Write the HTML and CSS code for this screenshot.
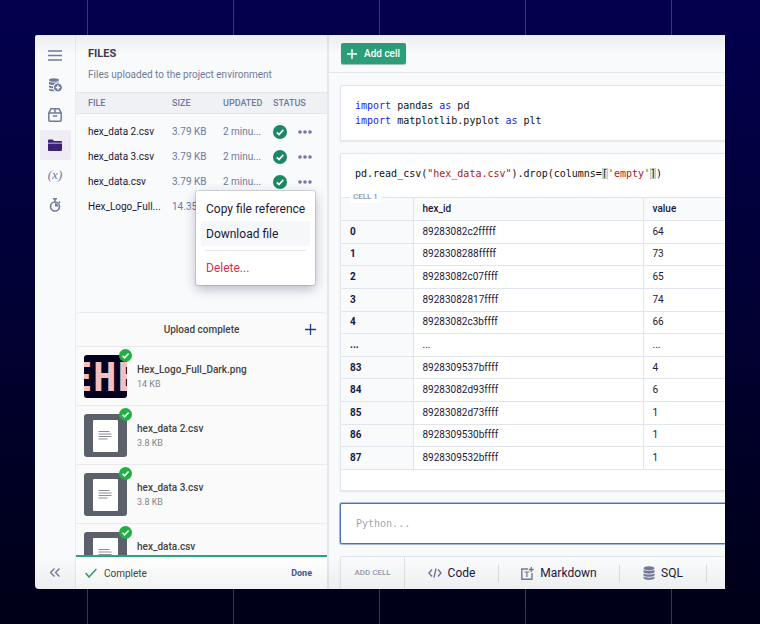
FILE: index.html
```
<!DOCTYPE html>
<html lang="en">
<head>
  <meta charset="UTF-8" />
  <meta name="viewport" content="width=device-width, initial-scale=1.0" />
  <title>Files - Project</title>
  <link rel="stylesheet" href="styles.css">
</head>
<body>
  <!-- shared icons -->
  <svg class="sprite" aria-hidden="true">
    <symbol id="ok" viewBox="0 0 14 14">
      <circle cx="7" cy="7" r="7" />
      <path d="M3.8 7.3l2.2 2.2 4.3-4.6" fill="none" stroke="#fff" stroke-width="1.7" />
    </symbol>
    <symbol id="dots" viewBox="0 0 14 4">
      <circle cx="2" cy="2" r="1.8" /><circle cx="7" cy="2" r="1.8" /><circle cx="12" cy="2" r="1.8" />
    </symbol>
    <symbol id="doc" viewBox="0 0 43 43">
      <rect width="43" height="43" fill="#5b606b" />
      <rect x="9" y="6" width="25" height="32" rx="1" fill="#fff" />
      <path d="M14.500 17.500h11M14.500 20h13M14.500 22.500h13M14.500 25h9" stroke="#8b909b" stroke-width="1.200" />
    </symbol>
    <symbol id="db" viewBox="0 0 12 14">
      <path d="M.5 2.200C.5.900 3 .2 6 .2s5.500.7 5.500 2S9 4.200 6 4.200.5 3.500.5 2.200z" />
      <path d="M.5 3.800C2 5.200 10 5.200 11.500 3.800v2.500C10 8.200 2 8.200.5 6.300z" />
      <path d="M.5 7.300c1.500 1.700 9.500 1.700 11 0v2.200c-1.500 1.700-9.500 1.700-11 0z" />
      <path d="M.5 10.500c1.500 1.600 9.500 1.600 11 0v1.200c0 1.300-2.500 2.100-5.500 2.100S.5 13 .5 11.700z" />
    </symbol>
  </svg>

  <div class="window">
    <nav class="rail">
      <button class="rail-btn" aria-label="Menu">
        <svg width="14" height="11" viewBox="0 0 14 11"><path d="M0 1h14M0 5.500h14M0 10h14" stroke="currentColor" stroke-width="1.400" /></svg>
      </button>
      <button class="rail-btn" aria-label="Data connections">
        <svg width="14" height="14" viewBox="0 0 14 14" fill="currentColor">
          <ellipse cx="6" cy="2" rx="5" ry="1.800" />
          <path d="M1 3.500c1.500 1.300 8.500 1.300 10 0v1.200c-2.500-.4-4.600.6-5.500 2.400C3.500 7 1.800 6.600 1 6zM1 7.200c1 .7 2.500 1 4 1v2c-1.500 0-3-.3-4-1zM1 10.400c1 .7 2.700 1 4.400 1 .3.800.8 1.400 1.400 1.900C4 13.500 1 13 1 12z" />
          <path fill-rule="evenodd" d="M9.900 5.500a4 4 0 1 0 .01 0zM9.200 7.300h1.400v1.500h1.500v1.400h-1.500v1.500H9.200v-1.500H7.700V8.800h1.500z" />
        </svg>
      </button>
      <button class="rail-btn" aria-label="Packages">
        <svg width="14" height="14" viewBox="0 0 14 14" fill="none" stroke="currentColor" stroke-width="1.500">
          <path d="M.8 5v7.200q0 1 1 1h10.400q1 0 1-1V5L11 .8H3zM.8 5h12.400M7 .8V5M4.800 8h4.400" />
        </svg>
      </button>
      <button class="rail-btn active" aria-label="Files">
        <svg width="14" height="12" viewBox="0 0 14 12" fill="currentColor">
          <path d="M0 1.500Q0 .5 1 .5h3.500L6 2h7q1 0 1 1v.7H0zM0 4.500h14V11q0 1-1 1H1q-1 0-1-1z" />
        </svg>
      </button>
      <button class="rail-btn variables" aria-label="Variables">(x)</button>
      <button class="rail-btn" aria-label="Schedules">
        <svg width="12" height="14" viewBox="0 0 12 14">
          <circle cx="6" cy="8.500" r="4.500" fill="none" stroke="currentColor" stroke-width="1.600" />
          <path d="M4 .8h4M6 .8v3M9.800 3.600l1.200 1.200" stroke="currentColor" stroke-width="1.500" />
          <path d="M6 5.200v3.300h3.200A3.300 3.300 0 0 0 6 5.200z" fill="currentColor" />
        </svg>
      </button>
      <button class="rail-btn collapse" aria-label="Collapse">
        <svg width="10" height="9" viewBox="0 0 10 9" fill="none" stroke="currentColor" stroke-width="1.400"><path d="M4.500.5l-4 4 4 4M9.500.5l-4 4 4 4" /></svg>
      </button>
    </nav>

    <aside class="panel">
      <section class="files">
        <header class="files-head">
          <h1>FILES</h1>
          <p>Files uploaded to the project environment</p>
        </header>
        <table class="file-table">
          <colgroup><col class="c-file"><col class="c-size"><col class="c-updated"><col class="c-status"><col></colgroup>
          <thead>
            <tr><th>FILE</th><th>SIZE</th><th>UPDATED</th><th colspan="2">STATUS</th></tr>
          </thead>
          <tbody>
            <tr>
              <td class="name">hex_data 2.csv</td><td>3.79 KB</td><td>2 minu...</td>
              <td><svg class="ok"><use href="#ok" /></svg></td>
              <td><button class="more" aria-label="More"><svg><use href="#dots" /></svg></button></td>
            </tr>
            <tr>
              <td class="name">hex_data 3.csv</td><td>3.79 KB</td><td>2 minu...</td>
              <td><svg class="ok"><use href="#ok" /></svg></td>
              <td><button class="more" aria-label="More"><svg><use href="#dots" /></svg></button></td>
            </tr>
            <tr>
              <td class="name">hex_data.csv</td><td>3.79 KB</td><td>2 minu...</td>
              <td><svg class="ok"><use href="#ok" /></svg></td>
              <td class="menu-anchor">
                <button class="more" aria-label="More"><svg><use href="#dots" /></svg></button>
                <div class="menu">
                  <button>Copy file reference</button>
                  <button class="hover">Download file</button>
                  <hr>
                  <button class="danger">Delete...</button>
                </div>
              </td>
            </tr>
            <tr>
              <td class="name">Hex_Logo_Full...</td><td>14.35 KB</td><td></td><td></td><td></td>
            </tr>
          </tbody>
        </table>
      </section>

      <section class="uploads">
        <header class="uploads-head">
          <h2>Upload complete</h2>
          <button class="add" aria-label="Add more">
            <svg width="11" height="11" viewBox="0 0 11 11"><path d="M5.500 0v11M0 5.500h11" stroke="currentColor" stroke-width="1.300" /></svg>
          </button>
        </header>
        <ul class="upload-list">
          <li>
            <div class="thumb">
              <svg class="preview" viewBox="0 0 43 43" role="img" aria-label="Hex logo">
                <rect width="43" height="43" fill="#04001f" />
                <text class="logo-text" x="-15 9 33" y="36">EHE</text>
              </svg>
              <svg class="badge"><use href="#ok" /></svg>
            </div>
            <div><b>Hex_Logo_Full_Dark.png</b><span>14 KB</span></div>
          </li>
          <li>
            <div class="thumb"><svg class="preview"><use href="#doc" /></svg><svg class="badge"><use href="#ok" /></svg></div>
            <div><b>hex_data 2.csv</b><span>3.8 KB</span></div>
          </li>
          <li>
            <div class="thumb"><svg class="preview"><use href="#doc" /></svg><svg class="badge"><use href="#ok" /></svg></div>
            <div><b>hex_data 3.csv</b><span>3.8 KB</span></div>
          </li>
          <li>
            <div class="thumb"><svg class="preview"><use href="#doc" /></svg><svg class="badge"><use href="#ok" /></svg></div>
            <div><b>hex_data.csv</b></div>
          </li>
        </ul>
        <footer class="uploads-foot">
          <svg width="12" height="10" viewBox="0 0 12 10"><path d="M.6 5l3.400 4L11.400 1" fill="none" stroke="#259b74" stroke-width="1.500" /></svg>
          <span>Complete</span>
          <button>Done</button>
        </footer>
      </section>
    </aside>

    <main class="notebook">
      <div class="toolbar">
        <button class="add-cell">
          <svg width="10" height="10" viewBox="0 0 10 10"><path d="M5 0v10M0 5h10" stroke="#fff" stroke-width="1.500" /></svg>
          Add cell
        </button>
      </div>
      <div class="cells">
        <div class="cell imports">
<pre><i>import</i> pandas <i>as</i> pd
<i>import</i> matplotlib.pyplot <i>as</i> plt</pre>
        </div>

        <div class="cell">
<pre class="query">pd.read_csv(<em>"hex_data.csv"</em>).drop(columns=<mark>[</mark><em>'empty'</em><mark>]</mark>)</pre>
          <div class="output">
            <span class="cell-label">CELL 1</span>
            <table class="data">
              <colgroup><col class="c-index"><col class="c-hex"><col></colgroup>
              <thead><tr><th></th><th>hex_id</th><th>value</th></tr></thead>
              <tbody>
                <tr><th>0</th><td>89283082c2fffff</td><td>64</td></tr>
                <tr><th>1</th><td>8928308288fffff</td><td>73</td></tr>
                <tr><th>2</th><td>89283082c07ffff</td><td>65</td></tr>
                <tr><th>3</th><td>89283082817ffff</td><td>74</td></tr>
                <tr><th>4</th><td>89283082c3bffff</td><td>66</td></tr>
                <tr><th>...</th><td>...</td><td>...</td></tr>
                <tr><th>83</th><td>8928309537bffff</td><td>4</td></tr>
                <tr><th>84</th><td>89283082d93ffff</td><td>6</td></tr>
                <tr><th>85</th><td>89283082d73ffff</td><td>1</td></tr>
                <tr><th>86</th><td>8928309530bffff</td><td>1</td></tr>
                <tr><th>87</th><td>8928309532bffff</td><td>1</td></tr>
              </tbody>
            </table>
          </div>
        </div>

        <textarea class="editor" rows="1" placeholder="Python..." aria-label="Python code"></textarea>

        <div class="cell add-bar">
          <span class="add-label">ADD CELL</span>
          <button class="b-code">
            <svg width="14" height="10" viewBox="0 0 14 10" fill="none" stroke="currentColor" stroke-width="1.400"><path d="M4 1.500L1 5l3 3.500M10 1.500L13 5l-3 3.500M8 .5L6 9.500" /></svg>
            Code
          </button>
          <button class="b-markdown">
            <svg width="13" height="13" viewBox="0 0 13 13" fill="none" stroke="currentColor" stroke-width="1.400"><path d="M7 2H.8v10.200H11V6M10.300 0v5M7.800 2.500h5" /><path d="M3.500 5h4.800M5.900 5v5" stroke-width="1.200" /></svg>
            Markdown
          </button>
          <button class="b-sql">
            <svg width="12" height="14" fill="currentColor"><use href="#db" /></svg>
            SQL
          </button>
        </div>
      </div>
    </main>
  </div>
</body>
</html>
```

FILE: styles.css
```
* {
  box-sizing: border-box;
}
body {
  margin: 0;
  height: 100vh;
  padding: 35px;
  font-family: Roboto, "Liberation Sans", sans-serif;
  font-size: 10px;
  color: #1c1838;
  background:
    repeating-linear-gradient(90deg, transparent 0 87px, rgba(150, 130, 180, 0.4) 87px 88px, transparent 88px 146px),
    linear-gradient(#03004e, #000018);
}
button {
  font: inherit;
  color: inherit;
  background: none;
  border: none;
  padding: 0;
  cursor: pointer;
}
h1, h2, p, ul, pre {
  margin: 0;
  padding: 0;
}
svg {
  display: block;
  flex: none;
}
.sprite {
  position: absolute;
  width: 0;
  height: 0;
}
.window {
  position: relative;
  display: flex;
  height: 100%;
  min-height: 554px;
  overflow: hidden;
  background: #f9fafc;
  border-radius: 2px 0 0 4px;
}
/* soft shade along the top and bottom edge */
.window::after {
  content: "";
  position: absolute;
  inset: 0;
  pointer-events: none;
  background:
    linear-gradient(rgba(60, 70, 80, 0.07), transparent 20px),
    linear-gradient(0deg, rgba(60, 70, 80, 0.07), transparent 32px);
}

/* left rail */
.rail {
  flex: 0 0 41px;
  display: flex;
  flex-direction: column;
  align-items: center;
  padding: 5px 0;
  border-right: 1px solid #e9ebf0;
  color: #717a98;
}
.rail-btn {
  width: 31px;
  height: 30px;
  display: flex;
  align-items: center;
  justify-content: center;
  border-radius: 2px;
}
.rail-btn.active {
  background: #efecf5;
  color: #3b2277;
}
.variables {
  font: italic 13px "Liberation Serif", serif;
}
.collapse {
  margin-top: auto;
  height: 24px;
}

/* files panel */
.panel {
  flex: 0 0 253px;
  display: flex;
  flex-direction: column;
  border-right: 2px solid #e6e8ee;
}
.files {
  flex: 1 1 50%;
}
.files-head {
  height: 57px;
  padding: 12px 12px 0;
}
.files-head h1 {
  font-size: 11px;
  line-height: 14px;
  font-weight: 700;
  color: #3b3953;
}
.files-head p {
  margin-top: 7px;
  line-height: 14px;
  color: #717a98;
}
.file-table {
  width: 100%;
  table-layout: fixed;
  border-collapse: collapse;
  color: #7079a0;
}
.c-file { width: 96px; }
.c-size { width: 51px; }
.c-updated { width: 50px; }
.c-status { width: 25px; }
.file-table th {
  height: 21px;
  padding: 0;
  text-align: left;
  font-size: 9px;
  font-weight: 500;
  background: #f0f1f5;
  border: solid #e4e6eb;
  border-width: 1px 0;
}
.file-table td {
  height: 25px;
  padding: 0;
  white-space: nowrap;
}
.file-table tbody::before {
  content: "";
  display: block;
  height: 5px;
}
.file-table th:first-child,
.file-table td:first-child {
  padding-left: 12px;
}
.file-table .name {
  color: #1c1838;
}
.ok {
  width: 14px;
  height: 14px;
  fill: #1c8765;
}
.more {
  display: block;
  padding: 5px 0;
}
.more svg {
  width: 14px;
  height: 4px;
  fill: #7079a0;
}
.menu-anchor {
  position: relative;
}
.menu {
  position: absolute;
  top: 22px;
  right: 12px;
  z-index: 2;
  width: 119px;
  padding: 5px;
  background: #fff;
  border-radius: 2px;
  box-shadow: 0 0 0 1px rgba(30, 30, 60, 0.14), 0 4px 12px rgba(30, 30, 60, 0.3);
}
.menu button {
  display: block;
  width: 100%;
  height: 25px;
  padding-left: 5px;
  text-align: left;
  white-space: nowrap;
  font-size: 12px;
  color: #1c1838;
}
.menu .hover {
  background: #f6f7f9;
}
.menu hr {
  margin: 4px;
  border: none;
  border-top: 1px solid #e6e7eb;
}
.menu .danger {
  color: #cb3550;
}

/* uploads */
.uploads {
  flex: 0 0 50%;
  display: flex;
  flex-direction: column;
  overflow: hidden;
  background: #fafafa;
  border: 1px solid #e9eaee;
  border-width: 1px 0 0 0;
  border-radius: 4px 4px 0 0;
}
.uploads-head {
  flex: none;
  display: flex;
  align-items: center;
  height: 34px;
  padding: 0 11px;
  border-bottom: 1px solid #eaeaea;
}
.uploads-head h2 {
  flex: 1;
  padding-left: 11px;
  text-align: center;
  font-size: 10px;
  font-weight: 500;
  color: #444;
}
.add {
  color: #1f3d82;
}
.upload-list {
  flex: 1;
  min-height: 0;
  overflow: hidden;
  list-style: none;
}
.upload-list li {
  display: flex;
  gap: 10px;
  height: 59px;
  padding: 8px 8px 7px;
  border-bottom: 1px solid #eaeaea;
}
.upload-list b,
.upload-list span {
  display: block;
  line-height: 15px;
}
.upload-list b {
  padding-top: 7px;
  font-weight: 500;
  color: #444;
}
.upload-list span {
  font-size: 9px;
  color: #858585;
}
.thumb {
  position: relative;
  width: 43px;
  height: 43px;
}
.preview {
  width: 43px;
  height: 43px;
  border-radius: 3px;
}
.logo-text {
  font: bold 39px "DejaVu Sans Mono", monospace;
  fill: #f5bfbf;
}
.badge {
  position: absolute;
  top: -6px;
  right: -5px;
  width: 13px;
  height: 13px;
  fill: #21ae45;
}
.uploads-foot {
  flex: none;
  display: flex;
  align-items: center;
  gap: 7px;
  height: 34px;
  padding: 0 15px 0 9px;
  background: #fff;
  border-top: 2px solid #2aa67b;
  color: #444;
}
.uploads-foot button {
  margin-left: auto;
  font-size: 9px;
  font-weight: 700;
  color: #3f588f;
}

/* notebook */
.notebook {
  flex: 1;
  min-width: 0;
}
.toolbar {
  height: 38px;
  padding: 8px 12px;
  border-bottom: 1px solid #e6e8ec;
}
.add-cell {
  display: flex;
  align-items: center;
  gap: 7px;
  height: 21px;
  padding: 0 6px;
  font-weight: 500;
  color: #fff;
  background: #2b9f79;
  border-radius: 2px;
  box-shadow: 0 1px 1px rgba(20, 90, 70, 0.4);
}
.cells {
  display: flex;
  flex-direction: column;
  gap: 12px;
  padding: 12px 0 0 11px;
}
.cell {
  background: #fff;
  border: 1px solid #e2e5ea;
  border-right: none;
  border-radius: 2px 0 0 2px;
  box-shadow: 0 1px 2px rgba(40, 50, 70, 0.1);
}
pre {
  font: 10px/15px "DejaVu Sans Mono", monospace;
  color: #111;
}
pre i {
  font-style: normal;
  color: #2222ee;
}
pre em {
  font-style: normal;
  color: #aa1818;
}
mark {
  color: inherit;
  background: #dfe6df;
  outline: 1px solid #c2cdc2;
  outline-offset: -1px;
}
.imports {
  padding: 12px 14px;
}
.query {
  padding: 12px 14px 16px;
}
.output {
  position: relative;
  padding-bottom: 20px;
}
.cell-label {
  position: absolute;
  top: -6px;
  left: 9px;
  padding: 0 3px;
  font-size: 8px;
  line-height: 12px;
  font-weight: 500;
  color: #8d95ac;
  background: #fff;
}
.data {
  width: 100%;
  height: 273px;
  table-layout: fixed;
  border-collapse: collapse;
}
.c-index { width: 72px; }
.c-hex { width: 230px; }
.data th,
.data td {
  padding: 0 9px;
  text-align: left;
  line-height: 14px;
  border: solid #e2e5ee;
  border-width: 1px 0 1px 1px;
}
.data th {
  font-weight: 500;
  background: #f9fafc;
}
.data thead th {
  height: 23px;
}
.data tbody th {
  font-weight: 700;
}
.data tr > :first-child {
  border-left: none;
}
.editor {
  display: block;
  width: 100%;
  height: 41px;
  padding: 12px 15px;
  resize: none;
  font: 10px/15px "DejaVu Sans Mono", monospace;
  background: #fff;
  border: 1px solid #4d71b5;
  border-right: none;
  border-radius: 2px 0 0 2px;
  box-shadow: 0 0 0 1px #a9bbdc;
  outline: none;
}
.editor::placeholder {
  color: #a0a6b5;
}
.add-bar {
  display: flex;
  align-items: center;
  height: 34px;
  background: #fafbfc;
}
.add-label {
  width: 64px;
  line-height: 32px;
  text-align: center;
  font-size: 8px;
  font-weight: 500;
  color: #959cb0;
  border-right: 1px solid #e0e2e8;
}
.add-bar button {
  display: flex;
  align-items: center;
  justify-content: center;
  gap: 6px;
  height: 17px;
  font-size: 12px;
  border-right: 1px solid #dcdee5;
}
.add-bar svg {
  color: #717a98;
}
.b-code { width: 94px; }
.b-markdown { width: 121px; }
.b-sql { width: 87px; }
```
